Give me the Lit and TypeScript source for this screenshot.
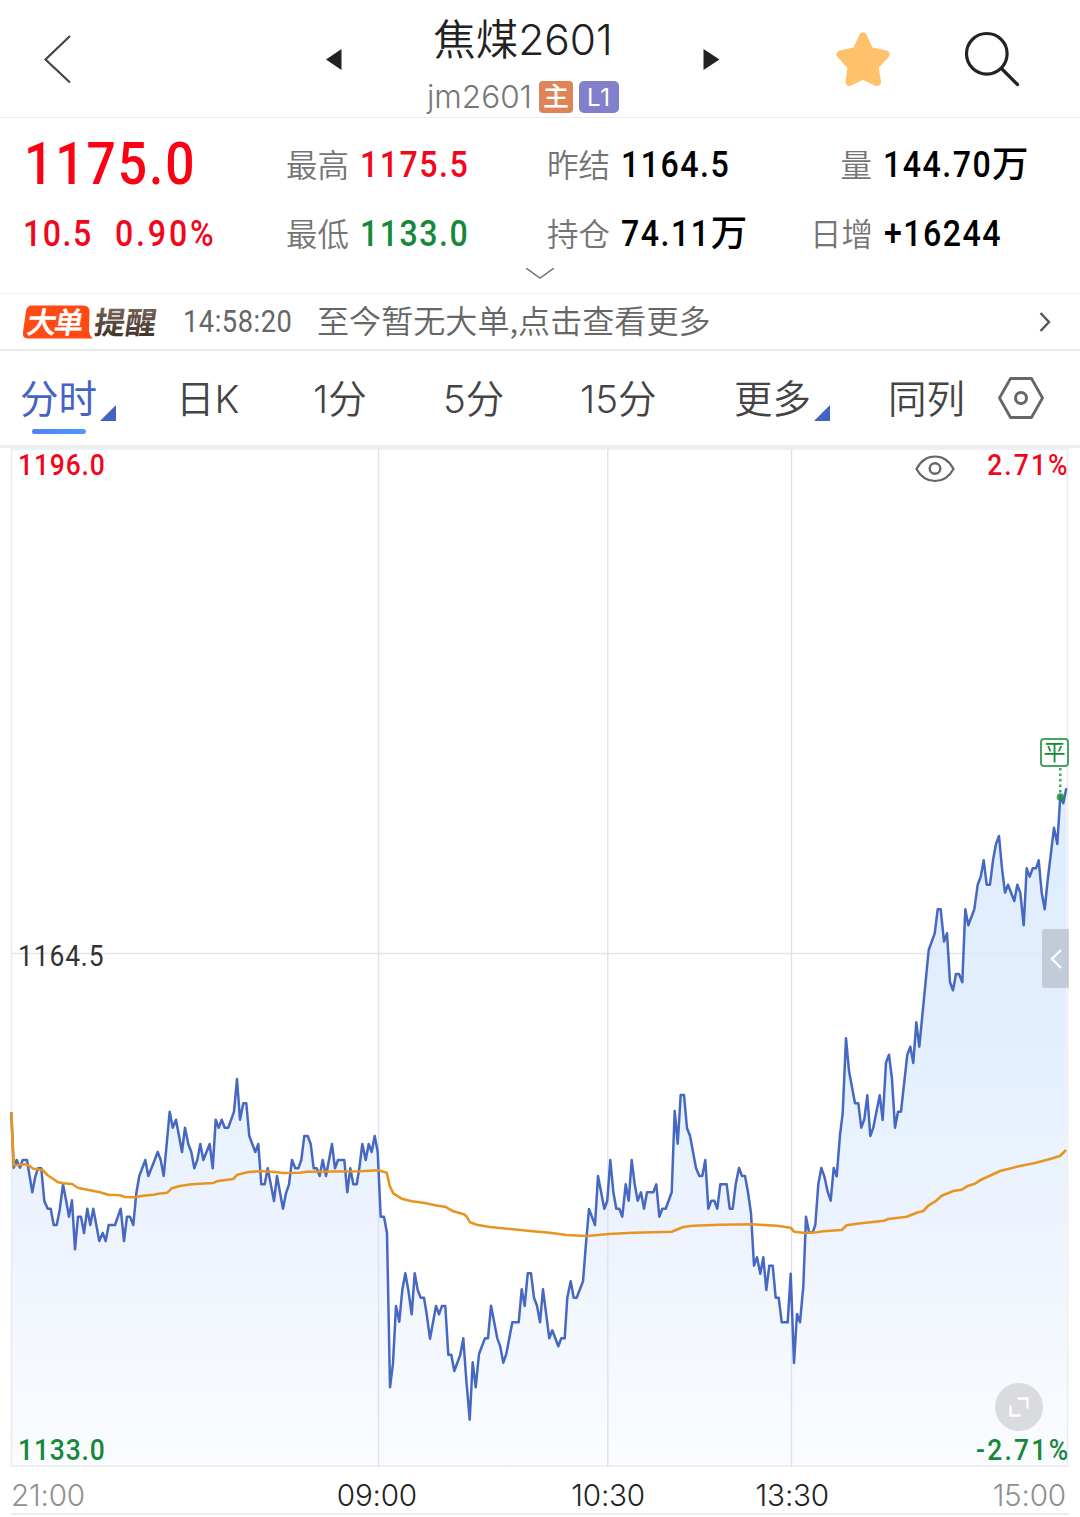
import { LitElement, html, css, svg } from "lit";
import { customElement, property } from "lit/decorators.js";
import { classMap } from "lit/directives/class-map.js";

type Pt = [number, number];

/** Expands a run of coordinates stored in thirds of a pixel from an origin. */
const run = (ox: number, oy: number, v: number[]): Pt[] => {
  const out: Pt[] = [];
  for (let i = 0; i < v.length; i += 2) out.push([ox + v[i] / 3, oy + v[i + 1] / 3]);
  return out;
};

const PRICE: Pt[] = [
  ...run(0, 1060, [34,157,41,323,50,300,60,323,68,300,81,300,97,397,106,350,114,325,124,325,133,423,143,446,152,446,161,495,170,495,179,450,189,373,198,420,207,470,216,421,225,568,234,470,243,470,252,519,262,446,271,495,280,446,298,543,308,519,317,543,326,495,345,495,362,446,372,543,381,470,390,470,400,495,409,400,418,348,436,300,445,348,464,300,473,276,482,300,491,348,509,155,518,203,528,179,546,276,555,203,565,252,574,276,583,325,592,300,601,252,610,300,629,252,638,325,647,179,656,203,665,179,674,203,685,203,702,155,711,57,720,179,730,130,739,130,748,228,766,276,775,252]),
  ...run(220, 1060, [124,373,134,373,143,325,162,423,171,348,189,446,198,400,207,373,216,300,226,325,235,325,244,300,253,228,263,228,272,252,281,325,290,325,299,348,308,300,318,348,336,252,345,325,354,300,373,300,382,397,391,325,400,373,410,373,418,325,427,252,437,300,446,252,455,276,464,228,473,276,482,470,492,470,501,519,510,982,519,910,528,738,538,785,547,690,556,640,565,690,575,763,584,640,593,690,602,713,612,713,620,763,630,836,648,738,657,763,666,738,676,738,685,884,694,884,703,933,721,884,730,835,739,960,749,1079]),
  ...run(440, 1180, [98,547,107,622,117,522,135,475,144,475,153,377,172,475,181,500,190,548,199,522,217,427,236,427,245,328,254,378,263,280,273,280,282,353,291,377,300,427,309,328,328,475,337,451,355,499,364,475,374,475,382,353,392,304,401,353,410,353,429,304,438,190]),
  ...run(560, 1070, [87,417,105,465,114,318,133,416,142,392,151,270,160,365,169,416,178,416,187,440,197,343,206,392,215,270,224,343,233,392,243,367,252,416,261,367,280,367,289,343,298,440,307,416,317,416,335,367,344,123,353,221,362,75,372,75,381,175,390,197,408,294,418,318,427,318,436,270,445,416,454,392,463,392,472,416,481,343,500,343,509,416,518,416,527,343,537,294,546,318,555,318,564,367,573,430,582,587,591,562,601,611,610,562,619,660,628,587,638,587,647,683,656,683,665,757,683,757,692,611,702,879,711,732,720,757,730,650]),
  ...run(780, 1000, [78,650,87,697,98,697,106,675,115,553,124,504,133,529,143,575,152,602,161,504,170,529,180,405,188,340,198,115,207,213,225,310,235,310,244,383,253,358,262,286,271,408,280,383,299,286,308,360,318,188,327,164,336,237,345,383,354,335,363,335,382,164,391,140,400,189,409,67,418,140]),
  ...run(890, 720, [116,690,134,640,143,568,152,568,162,665,171,640,180,787,189,811,198,762,207,762,217,787,226,568,235,616,253,568,263,494,272,470,281,421,290,494,300,494,309,421,318,372,327,348,336,445,345,518,354,494,373,543,382,494,391,518,401,616,410,445,419,470,428,445,438,445,446,421,455,518,464,568,473,480,492,323,502,372,511,228,520,250,529,205]),
];

const AVERAGE: Pt[] = [
  ...run(0, 1060, [34,157,41,316,75,313,88,317,100,326,128,330,142,345,160,357,175,367,190,370,216,372,235,384,270,391,300,397,325,404,360,406,375,411,405,412,430,407,460,404,475,401,502,398,515,385,540,378,575,373,640,369,650,364,700,357,712,344,745,336,780,334]),
  ...run(220, 1060, [130,334,165,336,190,339,240,338,260,335,420,334,475,331,500,338,510,380,520,400,545,416,575,424,615,429,645,436,678,441]),
  ...run(440, 1180, [15,80,40,94,72,103,80,110,90,127,110,134,150,141,270,153,330,158,380,165,440,168,475,165,505,162,580,158]),
  ...run(560, 1070, [335,485,370,471,400,467,480,464,575,463,650,467,692,473,702,485,735,489,770,487]),
  ...run(780, 1000, [130,694,185,690,200,676,230,671,312,662,325,657,380,650,410,638,430,633,445,617,465,605,485,587,520,573,545,569,565,557,585,551,600,541,660,513,720,498,765,489,810,477,840,468,858,450]),
];

const toPath = (p: Pt[]) => "M" + p.map(([x, y]) => `${x.toFixed(1)} ${y.toFixed(1)}`).join("L");

@customElement("quote-header")
class QuoteHeader extends LitElement {
  static styles = css`
    :host { display: block; }
    .bar { display: grid; grid-template-columns: 326px 70px 254px 186px 129px 115px; height: 117px; border-bottom: 1px solid #ececec; color: #222; }
    svg { display: block; overflow: visible; }
    .back { padding: 35px 0 0 44px; }
    .prev { padding-top: 49px; }
    .next { padding: 49px 0 0 53px; }
    .star { padding-top: 32px; }
    .search { padding-top: 32px; }
    .mid { display: flex; flex-direction: column; align-items: center; }
    .name { margin-top: 13px; font-size: 42.500px; line-height: 54px; height: 54px; white-space: nowrap; font-weight: 350; }
    .code { display: flex; align-items: center; margin-top: 12px; height: 36px; font-size: 31.5px; line-height: 38px; color: #777; font-weight: 350; }
    .tag { height: 32px; line-height: 31px; text-align: center; color: #fff; border-radius: 4px; font-weight: 500; }
    .main { width: 34px; margin-left: 7px; background: #df8456; font-size: 26px; }
    .lvl { width: 40px; margin-left: 6px; background: #8280cb; font-size: 24px; line-height: 33px; border-radius: 5px; font-weight: 400; letter-spacing: 1px; }
  `;
  render() {
    return html`<div class="bar">
      <div class="back"><svg width="27" height="48" viewBox="0 0 27 48"><path d="M26 1 1.5 24.500 26 47.500" fill="none" stroke="#444" stroke-width="2.200"/></svg></div>
      <div class="prev"><svg width="16" height="21" viewBox="0 0 16 21"><path d="M15.500 0v21L0 10.500z" fill="#222"/></svg></div>
      <div class="mid">
        <div class="name">焦煤2601</div>
        <div class="code"><span>jm2601</span><span class="tag main">主</span><span class="tag lvl">L1</span></div>
      </div>
      <div class="next"><svg width="17" height="21" viewBox="0 0 17 21"><path d="M.5 0v21L16.500 10.500z" fill="#222"/></svg></div>
      <div class="star"><svg width="54" height="56" viewBox="0 0 54 56"><path d="M27 4.500 33.500 19 49.500 22.500 38.500 34.500 41 50 27 43.500 13.500 50 15.500 34.500 4.500 22.500 20.500 19z" fill="#ffc26a" stroke="#ffc26a" stroke-width="8" stroke-linejoin="round"/><path d="M20 20h14l4 14-11 9-12-9z" fill="#ffc26a"/></svg></div>
      <div class="search"><svg width="55" height="56" viewBox="0 0 55 56"><circle cx="21.800" cy="21.800" r="20.300" fill="none" stroke="#222" stroke-width="3.200"/><path d="m36.500 36.500 16 16" stroke="#222" stroke-width="3.200" stroke-linecap="round"/></svg></div>
    </div>`;
  }
}

@customElement("quote-stats")
class QuoteStats extends LitElement {
  static styles = css`
    :host { display: block; font-family: Roboto, "Noto Sans CJK SC", sans-serif; }
    .panel { display: flex; flex-direction: column; height: 175px; border-bottom: 1px solid #f0f0f0; }
    .grid { display: grid; grid-template-columns: 286px 261px 263px 270px; grid-template-rows: 69px 69px; padding-top: 12px; align-items: center; }
    .num { display: block; transform: scaleX(0.88); transform-origin: left; line-height: 69px; white-space: nowrap; }
    .last { margin-left: 24px; font-size: 58.600px; font-weight: 500; letter-spacing: 2.200px; color: #fe0013; }
    .chg { display: flex; gap: 13px; padding-left: 23px; font-size: 36.500px; font-weight: 500; letter-spacing: 1.700px; color: #f2061c; }
    .pct { letter-spacing: 3.200px; }
    .cell { display: flex; gap: 10.500px; white-space: nowrap; }
    .label { font-family: "Noto Sans CJK SC", sans-serif; font-size: 31.500px; font-weight: 350; line-height: 66px; height: 69px; color: #757575; }
    .wide { width: 62px; text-align: right; }
    .value { font-size: 36.500px; font-weight: 500; letter-spacing: 1.700px; color: #000; }
    .unit { display: inline-block; transform: scaleX(1.136); transform-origin: left; letter-spacing: 0; }
    .up { color: #f2061c; }
    .down { color: #15883a; }
    svg { display: block; margin: 0 auto; }
  `;
  private cell(label: string, value: string, unit = "", cls = "") {
    return html`<div class="cell"><span class=${classMap({ label: true, wide: label.length < 2 })}>${label}</span><span class=${classMap({ num: true, value: true, up: cls === "up", down: cls === "down" })}>${value}${unit ? html`<span class="unit">${unit}</span>` : ""}</span></div>`;
  }
  render() {
    return html`<div class="panel">
      <div class="grid">
        <div class="num last">1175.0</div>
        ${this.cell("最高", "1175.5", "", "up")}${this.cell("昨结", "1164.5")}${this.cell("量", "144.70", "万")}
        <div class="chg"><span class="num">10.5</span><span class="num pct">0.90%</span></div>
        ${this.cell("最低", "1133.0", "", "down")}${this.cell("持仓", "74.11", "万")}${this.cell("日增", "+16244")}
      </div>
      <svg width="28" height="12" viewBox="0 0 28 12"><path d="m0 0 14 10L28 0" fill="none" stroke="#777" stroke-width="1.500"/></svg>
    </div>`;
  }
}

@customElement("alert-strip")
class AlertStrip extends LitElement {
  static styles = css`
    :host { display: block; }
    .strip { display: flex; align-items: center; height: 55px; border-bottom: 2px solid #ebebeb; padding: 0 29px 0 22px; color: #666; }
    .brand { flex: none; }
    .white { font: 500 29px "Noto Sans CJK SC", sans-serif; fill: #fff; stroke: #fff; stroke-width: 0.5px; }
    .brown { font: 700 31px "Noto Sans CJK SC", sans-serif; fill: url(#brown); }
    .time { width: 134px; margin-left: 23px; font: 400 31px/55px Roboto, sans-serif; letter-spacing: 0.600px; }
    .time span { display: block; transform: scaleX(0.88); transform-origin: left; }
    .msg { flex: 1; height: 55px; font: 350 32.100px/51px "Noto Sans CJK SC", sans-serif; white-space: nowrap; }
  `;
  render() {
    return html`<div class="strip">
      <svg class="brand" width="138" height="54" viewBox="0 -9 138 54">
        <defs><linearGradient id="brown" x1="0" y1="0" x2="0" y2="1"><stop offset="0" stop-color="#8a7466"/><stop offset="1" stop-color="#362a22"/></linearGradient></defs>
        <path d="M10 1.500H61Q68 1.500 67.500 8L67 26Q67 31 71 34.500H6Q0 34.500 1 28L4 7Q5 1.500 10 1.500Z" fill="#ff4a16"/>
        <text class="white" transform="translate(4 28.500) skewX(-9)" textLength="56">大单</text>
        <text class="brown" transform="translate(71 29.500) skewX(-8)" textLength="62">提醒</text>
      </svg>
      <span class="time"><span>14:58:20</span></span><span class="msg">至今暂无大单,点击查看更多</span>
      <svg width="12" height="20" viewBox="0 0 12 20"><path d="m1.500 1 8.500 9-8.500 9" fill="none" stroke="#555" stroke-width="2.400"/></svg>
    </div>`;
  }
}

@customElement("period-tabs")
class PeriodTabs extends LitElement {
  static styles = css`
    :host { display: block; }
    .tabs { display: grid; grid-template-columns: 156px 137px 130px 137px 154px 154px 109px 61px; height: 94px; padding-left: 21px; border-bottom: 3px solid #eee; color: #444; }
    .tab { display: flex; margin-left: -1px; font-size: 38.500px; line-height: 97px; white-space: nowrap; font-weight: 350; }
    .on { color: #4464c4; font-weight: 400; position: relative; }
    .on::after { content: ""; position: absolute; left: 12px; top: 78px; width: 54px; height: 5px; border-radius: 3px; background: linear-gradient(90deg, #5080f4, #4c9bfb); }
    .tri { margin: 54px 0 0 3px; width: 16px; height: 16px; background: #4464c4; clip-path: polygon(100% 0, 100% 100%, 0 100%); }
    .gear { margin-top: 26px; }
  `;
  @property({ type: Array }) items = ["分时", "日K", "1分", "5分", "15分", "更多", "同列"];
  render() {
    return html`<div class="tabs">
      ${this.items.map((t, i) => html`<div class=${classMap({ tab: true, on: i === 0 })}>${t}${i === 0 || i === 5 ? html`<i class="tri"></i>` : ""}</div>`)}
      <svg class="gear" width="46" height="42" viewBox="0 0 46 42"><path d="M12.500 1.500h21L44.500 21l-11 19.500h-21L1.500 21z" fill="none" stroke="#666" stroke-width="2.800" stroke-linejoin="round"/><circle cx="23" cy="21" r="5.500" fill="none" stroke="#666" stroke-width="3"/></svg>
    </div>`;
  }
}

@customElement("minute-chart")
class MinuteChart extends LitElement {
  static styles = css`
    :host { display: block; position: relative; height: 1019px; }
    .plot { display: block; }
    .lbl { position: absolute; font: 500 30px/30px Roboto, sans-serif; letter-spacing: 1px; color: #333; white-space: nowrap; transform: scaleX(0.88); transform-origin: left; }
    .tl { left: 18px; top: 2px; color: #f2061c; }
    .tr { right: 10px; top: 2px; color: #f2061c; transform-origin: right; letter-spacing: 2.400px; }
    .ml { left: 18px; top: 493px; font-weight: 400; }
    .bl { left: 18px; top: 987px; color: #15883a; }
    .br { right: 10px; top: 987px; color: #15883a; transform-origin: right; letter-spacing: 2.600px; }
    .eye { position: absolute; left: 915px; top: 7px; }
    .flat { position: absolute; left: 1040px; top: 290px; width: 25px; height: 25px; border: 2px solid #46a562; border-radius: 4px; background: #fff; color: #15883a; font-size: 22px; line-height: 24px; text-align: center; }
    .handle { position: absolute; left: 1042px; top: 481px; width: 27px; height: 59px; border-radius: 3px 0 0 3px; background: rgba(174, 182, 192, 0.600); display: grid; place-items: center; }
    .expand { position: absolute; left: 995px; top: 935px; width: 48px; height: 48px; border-radius: 50%; background: #d9dbdf; display: grid; place-items: center; }
  `;
  render() {
    const line = toPath(PRICE);
    return html`
      <svg class="plot" width="1080" height="1019" viewBox="0 448 1080 1019">
        <defs><linearGradient id="area" gradientUnits="userSpaceOnUse" x1="0" y1="788" x2="0" y2="1466">
          <stop offset="0" stop-color="#e0edfe"/><stop offset=".34" stop-color="#e2eefe"/><stop offset=".52" stop-color="#e9f3fe"/><stop offset=".69" stop-color="#eff3fe"/><stop offset=".76" stop-color="#f2f7fe"/><stop offset="1" stop-color="#fafcff"/>
        </linearGradient></defs>
        <path d="${line}V1466H11.300Z" fill="url(#area)"/>
        <path d="M11.500 449H1067.500V1466H11.500Z" fill="none" stroke="#e9ebef" stroke-width="1.500"/>
        <path d="M12 953.500H1067" stroke="#e3e5ea" stroke-width="1.500"/>
        ${[378.5, 607.8, 791.5].map((x) => svg`<path d="M${x} 449V1467" stroke="#dcdff0" stroke-width="1.300"/>`)}
        <path d=${line} fill="none" stroke="#4668c2" stroke-width="2.500" stroke-linejoin="round"/>
        <path d=${toPath(AVERAGE)} fill="none" stroke="#e8951f" stroke-width="2.600" stroke-linejoin="round"/>
        <path d="M1060.300 768V797" stroke="#46a562" stroke-width="2.500" stroke-dasharray="2.500 3"/>
        <circle cx="1060.500" cy="797" r="3.800" fill="#1f8f43" opacity=".85"/>
      </svg>
      <span class="lbl tl">1196.0</span><span class="lbl tr">2.71%</span><span class="lbl ml">1164.5</span>
      <span class="lbl bl">1133.0</span><span class="lbl br">-2.71%</span>
      <svg class="eye" width="40" height="28" viewBox="0 0 40 28"><path d="M1.500 14Q8 1.500 20 1.500T38.500 14Q32 26 20 26T1.500 14Z" fill="none" stroke="#666" stroke-width="2.200"/><circle cx="20" cy="13.500" r="5.300" fill="none" stroke="#666" stroke-width="2.400"/></svg>
      <div class="flat">平</div>
      <div class="handle"><svg width="12" height="20" viewBox="0 0 12 20"><path d="m11 1-9 9 9 9" fill="none" stroke="#fff" stroke-width="2.400"/></svg></div>
      <div class="expand"><svg width="20" height="20" viewBox="0 0 20 20"><path d="M8.500 1.500h10v10M11.500 18.500h-10V8.500" fill="none" stroke="#fff" stroke-width="2.400"/></svg></div>`;
  }
}

@customElement("app-root")
class AppRoot extends LitElement {
  static styles = css`
    :host { display: block; width: 1080px; height: 1517px; overflow: hidden; background: #fff; font-family: Inter, "Noto Sans CJK SC", sans-serif; }
    .axis { display: grid; grid-template-columns: 276px 130px 228px 184px 237px; height: 46px; padding-left: 11px; font-size: 29.700px; line-height: 57px; color: #222; font-weight: 350; letter-spacing: -0.200px; }
    .axis span { text-align: right; white-space: nowrap; }
    .axis .edge { color: #909090; }
    .axis .first { text-align: left; }
    .rule { height: 2px; margin: 0 11px; background: #ededed; }
  `;
  render() {
    return html`
      <quote-header></quote-header>
      <quote-stats></quote-stats>
      <alert-strip></alert-strip>
      <period-tabs></period-tabs>
      <minute-chart></minute-chart>
      <div class="axis"><span class="edge first">21:00</span><span></span><span></span><span></span><span></span></div>
      <div class="rule"></div>`;
  }
  /** Session marks shown under the plot, left to right. */
  static marks = ["09:00", "10:30", "13:30", "15:00"];
  updated() {
    const cells = this.renderRoot.querySelectorAll(".axis span");
    AppRoot.marks.forEach((m, i) => { cells[i + 1].textContent = m; });
    cells[4].classList.add("edge");
  }
}
